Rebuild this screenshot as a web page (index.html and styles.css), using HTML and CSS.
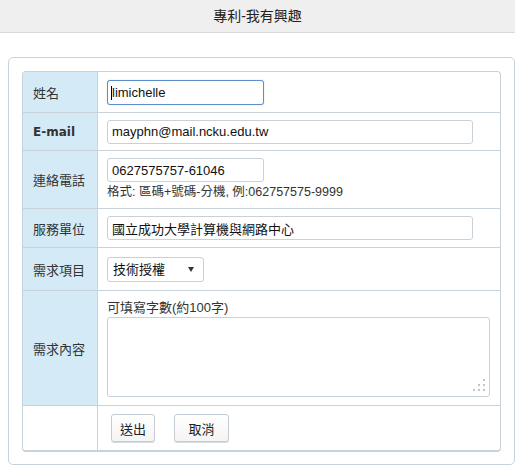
FILE: index.html
```html
<!DOCTYPE html>
<html lang="zh-Hant">
<head>
  <meta charset="UTF-8">
  <title>專利-我有興趣</title>
  <link rel="stylesheet" href="styles.css">
</head>
<body>
  <div class="topbar">專利-我有興趣</div>

  <div class="panel">
    <form class="form-table">
      <!-- 姓名 -->
      <div class="row row-name">
        <div class="label">姓名</div>
        <div class="field">
          <span class="input-wrap">
            <input class="text short focused" type="text" value="limichelle">
            <span class="caret"></span>
          </span>
        </div>
      </div>

      <!-- E-mail -->
      <div class="row row-mail">
        <div class="label label-en">E-mail</div>
        <div class="field">
          <input class="text long" type="text" value="mayphn@mail.ncku.edu.tw">
        </div>
      </div>

      <!-- 電話 -->
      <div class="row row-phone">
        <div class="label">連絡電話</div>
        <div class="field">
          <input class="text short" type="text" value="0627575757-61046">
          <div class="hint">格式: 區碼+號碼-分機, 例:062757575-9999</div>
        </div>
      </div>

      <!-- 單位 -->
      <div class="row row-unit">
        <div class="label">服務單位</div>
        <div class="field">
          <input class="text long" type="text" value="國立成功大學計算機與網路中心">
        </div>
      </div>

      <!-- 項目 -->
      <div class="row row-item">
        <div class="label">需求項目</div>
        <div class="field">
          <span class="select-wrap">
            <select class="select">
              <option>技術授權</option>
              <option>產學合作</option>
            </select>
          </span>
        </div>
      </div>

      <!-- 內容 -->
      <div class="row row-content">
        <div class="label">需求內容</div>
        <div class="field">
          <div class="note">可填寫字數(約100字)</div>
          <span class="area-wrap">
            <textarea class="area"></textarea>
            <svg class="grip" width="14" height="14" viewBox="0 0 14 14">
              <rect x="10" y="0" width="2" height="2"/>
              <rect x="5" y="5" width="2" height="2"/>
              <rect x="10" y="5" width="2" height="2"/>
              <rect x="0" y="10" width="2" height="2"/>
              <rect x="5" y="10" width="2" height="2"/>
              <rect x="10" y="10" width="2" height="2"/>
            </svg>
          </span>
        </div>
      </div>

      <!-- 按鈕 -->
      <div class="row row-actions">
        <div class="label label-empty"></div>
        <div class="field actions">
          <button type="button" class="btn btn-send">送出</button>
          <button type="button" class="btn btn-cancel">取消</button>
        </div>
      </div>
    </form>
  </div>
</body>
</html>
```

FILE: styles.css
```css
body {
  margin: 0;
  background: white;
  font-family: "Liberation Sans", "Noto Sans CJK TC", sans-serif;
  font-size: 13px;
  color: #333;
}

.topbar {
  width: 515px;
  height: 32px;
  line-height: 32px;
  background: #efefef;
  border-bottom: 1px solid #d9d9d9;
  text-align: center;
  font-size: 14px;
  color: #222;
}

.panel {
  box-sizing: border-box;
  width: 507px;
  height: 408px;
  margin: 24px 0 0 8px;
  border: 1px solid #c8d2da;
  border-radius: 5px;
  padding: 13px;
}

.form-table {
  margin: 0;
  border: 1px solid #c8d2da;
  border-bottom-width: 2px;
  border-radius: 4px;
  overflow: hidden;
}

.row {
  display: grid;
  grid-template-columns: 75px 1fr;
  box-sizing: border-box;
  border-bottom: 1px solid #c8d2da;
}

.row:last-child { border-bottom: 0; }

.row-name { height: 41px; }
.row-mail { height: 38px; }
.row-phone { height: 58px; }
.row-unit { height: 39px; }
.row-item { height: 43px; }
.row-content { height: 115px; }
.row-actions { height: 44px; }

.label {
  display: flex;
  align-items: center;
  padding-left: 10px;
  background: #d4ebf7;
  border-right: 1px solid #c8d2da;
  color: #333;
}

.label-en {
  font-family: "DejaVu Sans", sans-serif;
  font-weight: bold;
  font-size: 12px;
}

.label-empty { background: white; }

.field {
  display: flex;
  flex-direction: column;
  justify-content: center;
  align-items: flex-start;
  padding: 0 9px;
}

.text {
  box-sizing: border-box;
  height: 24px;
  margin: 0;
  padding: 0 4px;
  border: 1px solid #c8d0d8;
  border-radius: 3px;
  background: white;
  font: 13px "Liberation Sans", "Noto Sans CJK TC", sans-serif;
  color: #111;
  outline: none;
}

.short { width: 157px; }
.long { width: 366px; }

.focused {
  height: 25px;
  border-color: #5b8ecb;
  box-shadow: 0 0 1px #8fb4df;
}

.input-wrap {
  position: relative;
  display: inline-block;
}

.caret {
  position: absolute;
  left: 4px;
  top: 6px;
  width: 1px;
  height: 14px;
  background: #000;
}

.hint {
  margin-top: 1px;
  line-height: 18px;
  font-size: 12.5px;
  color: #333;
}

.select-wrap {
  position: relative;
  display: inline-block;
}

.select {
  box-sizing: border-box;
  width: 97px;
  height: 25px;
  padding: 0 0 0 5px;
  border: 1px solid #c8d0d8;
  border-radius: 3px;
  background: white;
  font: 13px "Liberation Sans", "Noto Sans CJK TC", sans-serif;
  color: #111;
  -webkit-appearance: none;
  appearance: none;
}

.select-wrap::after {
  content: "";
  position: absolute;
  right: 10px;
  top: 10px;
  border-left: 3.5px solid transparent;
  border-right: 3.5px solid transparent;
  border-top: 5px solid #333;
  pointer-events: none;
}

.note {
  line-height: 18px;
  color: #333;
}

.area-wrap {
  position: relative;
  display: block;
}

.area {
  display: block;
  box-sizing: border-box;
  width: 383px;
  height: 80px;
  margin: 0;
  border: 1px solid #c8d0d8;
  border-radius: 3px;
  resize: none;
  font: 13px "Liberation Sans", "Noto Sans CJK TC", sans-serif;
}

.grip {
  position: absolute;
  right: 3px;
  bottom: 4px;
  fill: #c4c4c4;
}

.actions {
  flex-direction: row;
  align-items: center;
  justify-content: flex-start;
  padding-left: 13px;
  gap: 19px;
}

.btn {
  box-sizing: border-box;
  height: 28px;
  margin: 0;
  border: 1px solid #c4ccd4;
  border-radius: 3px;
  background: linear-gradient(#ffffff, #f4f4f4);
  box-shadow: 0 1px 0 #d4dbe1;
  font: 13px "Liberation Sans", "Noto Sans CJK TC", sans-serif;
  color: #222;
  padding: 0;
}

.btn-send { width: 44px; }
.btn-cancel { width: 55px; }
```
